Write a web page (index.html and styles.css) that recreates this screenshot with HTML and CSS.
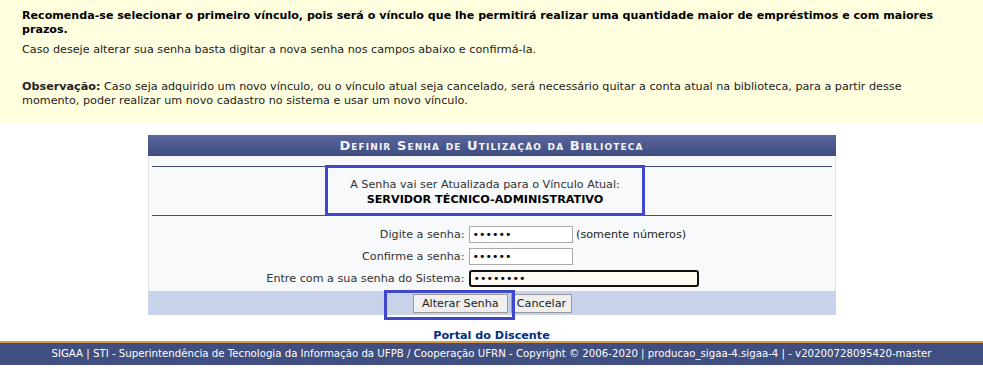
FILE: index.html
```html
<!DOCTYPE html>
<html>
	<head>
		<meta charset="utf-8">
		<title>SIGAA - Definir Senha da Biblioteca</title>
		<link rel="stylesheet" href="styles.css">
	</head>
	<body>
		<div class="aviso">
			<p class="destaque">Recomenda-se selecionar o primeiro vínculo, pois será o vínculo que lhe permitirá realizar uma quantidade maior de empréstimos e com maiores prazos.</p>
			<p>Caso deseje alterar sua senha basta digitar a nova senha nos campos abaixo e confirmá-la.</p>
			<p class="obs"><b>Observação:</b> Caso seja adquirido um novo vínculo, ou o vínculo atual seja cancelado, será necessário quitar a conta atual na biblioteca, para a partir desse momento, poder realizar um novo cadastro no sistema e usar um novo vínculo.</p>
		</div>

		<div class="formulario">
			<div class="form-titulo">Definir Senha de Utilização da Biblioteca</div>
			<div class="form-corpo">
				<div class="vinculo">
					<div class="vinculo-box">
						A Senha vai ser Atualizada para o Vínculo Atual:<br>
						<b>SERVIDOR TÉCNICO-ADMINISTRATIVO</b>
					</div>
				</div>
				<div class="campos">
					<label for="senha">Digite a senha:</label>
					<div><input type="password" id="senha" class="senha-curta" value="123456"> (somente números)</div>
					<label for="confirma">Confirme a senha:</label>
					<div><input type="password" id="confirma" class="senha-curta" value="123456"></div>
					<label for="sistema">Entre com a sua senha do Sistema:</label>
					<div><input type="password" id="sistema" class="senha-sistema ativo" value="12345678"></div>
				</div>
			</div>
			<div class="form-botoes">
				<span class="marca"><input type="button" class="btn-alterar" value="Alterar Senha"></span>
				<input type="button" value="Cancelar">
			</div>
		</div>

		<div class="voltar"><a href="javascript:void(0);">Portal do Discente</a></div>

		<div class="rodape">
			SIGAA | STI - Superintendência de Tecnologia da Informação da UFPB / Cooperação UFRN - Copyright © 2006-2020 | producao_sigaa-4.sigaa-4 | - v20200728095420-master
		</div>
	</body>
</html>
```

FILE: styles.css
```css
body {
	margin: 0;
	font-family: "DejaVu Sans", Verdana, sans-serif;
	font-size: 11.2px;
	color: #222;
	background-color: #fff;
}
.aviso {
	background-color: #ffffe0;
	padding: 9px 40px 0 22px;
	height: 114px;
}
.aviso p {
	margin: 0 0 6px 0;
	line-height: 14px;
}
.aviso .destaque {
	font-weight: bold;
	font-size: 11.1px;
	color: #000;
}
.aviso .obs {
	margin-top: 23px;
}
.formulario {
	width: 688px;
	margin: 12px auto 0 auto;
}
.form-titulo {
	height: 21px;
	line-height: 21px;
	background: linear-gradient(#5a679c, #3f4c7e);
	color: #f4f4fa;
	font-weight: bold;
	font-variant: small-caps;
	font-size: 13px;
	letter-spacing: 1.1px;
	text-align: center;
}
.form-corpo {
	background-color: #f8f9fb;
	border-left: 1px solid #dfe3ea;
	border-right: 1px solid #dfe3ea;
	padding: 10px 3px 4px 3px;
}
.vinculo {
	border-top: 1px solid #404e80;
	border-bottom: 1px solid #404e80;
	display: flex;
	justify-content: center;
}
.vinculo-box {
	width: 314px;
	margin-left: -13px;
	border: 3px solid #3f48cc;
	margin-top: -2px;
	margin-bottom: -1px;
	padding: 9px 0 6px 0;
	text-align: center;
	line-height: 15px;
	color: #333;
}
.vinculo-box b {
	color: #000;
}
.campos {
	display: grid;
	grid-template-columns: 313px 1fr;
	column-gap: 4px;
	row-gap: 5px;
	align-items: center;
	margin-top: 10px;
}
.campos label {
	text-align: right;
	color: #333;
}
.campos input {
	font-family: "DejaVu Sans", Verdana, sans-serif;
	font-size: 11px;
	height: 17px;
	box-sizing: border-box;
	border: 1px solid #a9a9a9;
	padding: 0 3px;
	background-color: #fff;
	margin: 0;
	vertical-align: middle;
}
.senha-curta {
	width: 104px;
}
.senha-sistema {
	width: 230px;
}
.campos .ativo {
	border: 2px solid #111;
	border-radius: 3px;
	background-color: #fffaf3;
}
.form-botoes {
	background-color: #c8d3ea;
	height: 24px;
	display: flex;
	justify-content: center;
	align-items: center;
	gap: 3px;
	padding-left: 2px;
}
.form-botoes input {
	font-family: "DejaVu Sans", Verdana, sans-serif;
	font-size: 11.2px;
	height: 19px;
	margin: 0;
	padding: 0 5px;
	background-color: #efefef;
	border: 1px solid #999;
	color: #222;
}
.form-botoes .btn-alterar {
	width: 95px;
}
.marca {
	position: relative;
	display: flex;
}
.marca:before {
	content: "";
	position: absolute;
	left: -29px;
	right: -7px;
	top: -4px;
	bottom: -7px;
	border: 3px solid #3f48cc;
}
.voltar {
	text-align: center;
	margin-top: 14px;
	height: 12px;
	line-height: 13px;
}
.voltar a {
	color: #003080;
	font-weight: bold;
	text-decoration: none;
}
.rodape {
	border-top: 2px solid #d99a43;
	background-color: #404e80;
	color: #fff;
	text-align: center;
	height: 22px;
	line-height: 22px;
	font-size: 10.2px;
}
```
